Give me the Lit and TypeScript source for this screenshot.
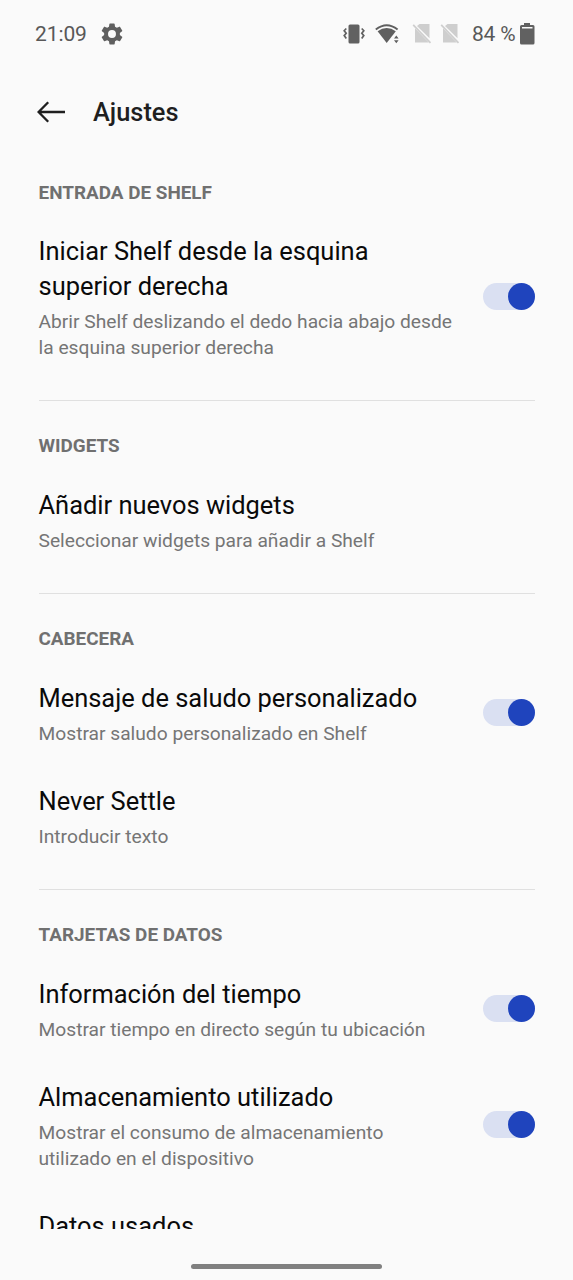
import { LitElement, html, css, svg, nothing } from "lit";
import { customElement, property } from "lit/decorators.js";

interface Item { title: string; sub?: string; on?: boolean; }
interface Section { name: string; items: Item[]; }

const SECTIONS: Section[] = [
  { name: "ENTRADA DE SHELF", items: [
    { title: "Iniciar Shelf desde la esquina superior derecha", sub: "Abrir Shelf deslizando el dedo hacia abajo desde la esquina superior derecha", on: true },
  ] },
  { name: "WIDGETS", items: [
    { title: "Añadir nuevos widgets", sub: "Seleccionar widgets para añadir a Shelf" },
  ] },
  { name: "CABECERA", items: [
    { title: "Mensaje de saludo personalizado", sub: "Mostrar saludo personalizado en Shelf", on: true },
    { title: "Never Settle", sub: "Introducir texto" },
  ] },
  { name: "TARJETAS DE DATOS", items: [
    { title: "Información del tiempo", sub: "Mostrar tiempo en directo según tu ubicación", on: true },
    { title: "Almacenamiento utilizado", sub: "Mostrar el consumo de almacenamiento utilizado en el dispositivo", on: true },
    { title: "Datos usados" },
  ] },
];

const noSim = svg`<path d="M7.500 1H17.500V15.300L5 2.900Z M3 5.200L16.800 19.500H3Z" fill="#cecece"/><path d="M1.200 1.800L18.500 19.800" stroke="#cecece" stroke-width="1.700"/>`;

@customElement("status-bar")
export class StatusBar extends LitElement {
  static styles = css`
    :host { display: flex; align-items: center; height: 66px; padding: 1px 38px 0 35px; box-sizing: border-box; color: #585858; font-size: 21px; line-height: 24px; }
    svg { display: block; flex: none; }
    .time { width: 52px; white-space: nowrap; letter-spacing: -0.1px; }
    .gear { margin-left: 14px; }
    .right { margin-left: auto; display: flex; align-items: center; }
    .wifi { margin-left: 10px; }
    .sim { margin-left: 12px; }
    .sim2 { margin-left: 8px; }
    .pct { margin-left: 12px; width: 44px; white-space: nowrap; letter-spacing: -0.2px; }
    .bat { margin-left: 3px; }
  `;
  render() {
    return html`
      <span class="time">21:09</span>
      <svg class="gear" width="22" height="22" viewBox="2 2 20 20" fill="#5f5f5f"><path d="M19.14 12.94c.04-.3.06-.61.06-.94s-.02-.64-.07-.94l2.030-1.580a.49.49 0 0 0 .12-.61l-1.920-3.320a.49.49 0 0 0-.59-.22l-2.390.96a7 7 0 0 0-1.620-.94l-.36-2.540a.48.48 0 0 0-.48-.41h-3.840a.48.48 0 0 0-.47.41l-.36 2.540c-.59.24-1.130.57-1.620.94l-2.390-.96a.48.48 0 0 0-.59.22L2.740 8.870a.48.48 0 0 0 .12.61l2.030 1.580a7.500 7.500 0 0 0 0 1.880l-2.030 1.580a.49.49 0 0 0-.12.61l1.920 3.320c.12.22.37.29.59.22l2.390-.96c.5.38 1.030.7 1.620.94l.36 2.540c.05.24.24.41.48.41h3.840c.24 0 .44-.17.47-.41l.36-2.540a7 7 0 0 0 1.620-.94l2.390.96c.22.08.47 0 .59-.22l1.920-3.320a.48.48 0 0 0-.12-.61zM12 15.600a3.600 3.600 0 1 1 0-7.200 3.600 3.600 0 0 1 0 7.200z"/></svg>
      <div class="right">
        <svg width="22" height="20" viewBox="0 0 22 20"><rect x="5.500" y="0.500" width="11" height="19" rx="1.500" fill="#616161"/><path d="M3.300 4.500L1.200 6.700L3.200 9.200L1.200 11.600L3.300 14.500M18.700 4.500L20.800 6.700L18.800 9.200L20.800 11.600L18.700 14.500" fill="none" stroke="#616161" stroke-width="1.700"/></svg>
        <svg class="wifi" width="25" height="20" viewBox="0 0 25 20"><path d="M.8 5.600Q11.700 -3.200 22.600 5.600" fill="none" stroke="#5f5f5f" stroke-width="1.900"/><path d="M2.600 7.300Q11.700 .9 20.800 7.300L11.700 19Z" fill="#5f5f5f"/><path d="M19 14.600L21.300 11.600L23.600 14.600ZM19 16.200L21.300 19.200L23.600 16.200Z" fill="#5f5f5f"/></svg>
        <svg class="sim" width="20" height="21" viewBox="0 0 20 21">${noSim}</svg>
        <svg class="sim2" width="20" height="21" viewBox="0 0 20 21">${noSim}</svg>
        <span class="pct">84 %</span>
        <svg class="bat" width="16" height="22" viewBox="0 0 16 22"><path d="M5 0H11V2H14Q15.500 2 15.500 3.500V20Q15.500 21.500 14 21.500H2.500Q1 21.500 1 20V3.500Q1 2 2.500 2H5Z" fill="#616161"/><rect x="3" y="4" width="10.500" height="1.500" fill="#fafafa"/></svg>
      </div>`;
  }
}

@customElement("setting-row")
export class SettingRow extends LitElement {
  @property({ attribute: false }) item!: Item;
  static styles = css`
    :host { display: flex; align-items: center; justify-content: space-between; padding: 19.700px 0 17.700px; }
    .text { width: 420px; }
    .title { font-size: 25.450px; line-height: 35px; color: #0a0a0a; max-width: 400px; }
    .sub { margin-top: 5px; font-size: 19.220px; line-height: 26px; color: #757575; }
    .switch { flex: none; display: flex; justify-content: flex-end; width: 52.500px; height: 27px; margin-bottom: 3px; border-radius: 14px; background: #dae0f2; }
    .thumb { width: 27px; height: 27px; border-radius: 50%; background: #1f44bd; }
  `;
  render() {
    const { title, sub, on } = this.item;
    return html`
      <div class="text">
        <div class="title">${title}</div>
        ${sub ? html`<div class="sub">${sub}</div>` : nothing}
      </div>
      ${on ? html`<div class="switch" role="switch" aria-checked="true"><div class="thumb"></div></div>` : nothing}`;
  }
}

@customElement("app-root")
export class AppRoot extends LitElement {
  static styles = css`
    :host { display: flex; flex-direction: column; width: 573px; height: 1280px; overflow: hidden; background: #fafafa; font-family: Roboto, sans-serif; }
    .bar { flex: none; display: flex; align-items: center; height: 92px; padding-left: 37px; gap: 27px; }
    .bar svg { display: block; }
    .heading { margin: 0; font-size: 25.400px; font-weight: 500; line-height: 32px; color: #1f1f1f; }
    .list { flex: none; height: 1071px; overflow: hidden; padding: 0 38px 0 38.500px; }
    .section { padding-bottom: 21.200px; }
    .section + .section { border-top: 1px solid #e0e0e0; }
    .name { margin: 0; padding: 32.200px 0 8.900px; font-size: 18.900px; font-weight: 700; line-height: 26px; color: #707070; }
    .section:first-child .name { padding-top: 21.800px; }
    .nav { flex: 1; display: flex; align-items: flex-end; justify-content: center; padding-bottom: 11px; }
    .handle { width: 191px; height: 5px; border-radius: 3px; background: #808080; }
  `;
  render() {
    return html`
      <status-bar></status-bar>
      <header class="bar">
        <svg width="29" height="22" viewBox="0 0 29 22" fill="none" stroke="#1f1f1f" stroke-width="2.300"><path d="M28 11H1.800M11.200 1.200L1.600 11L11.200 20.800"/></svg>
        <h1 class="heading">Ajustes</h1>
      </header>
      <main class="list">
        ${SECTIONS.map(s => html`<section class="section">
          <h2 class="name">${s.name}</h2>
          ${s.items.map(i => html`<setting-row .item=${i}></setting-row>`)}
        </section>`)}
      </main>
      <div class="nav"><div class="handle"></div></div>`;
  }
}
